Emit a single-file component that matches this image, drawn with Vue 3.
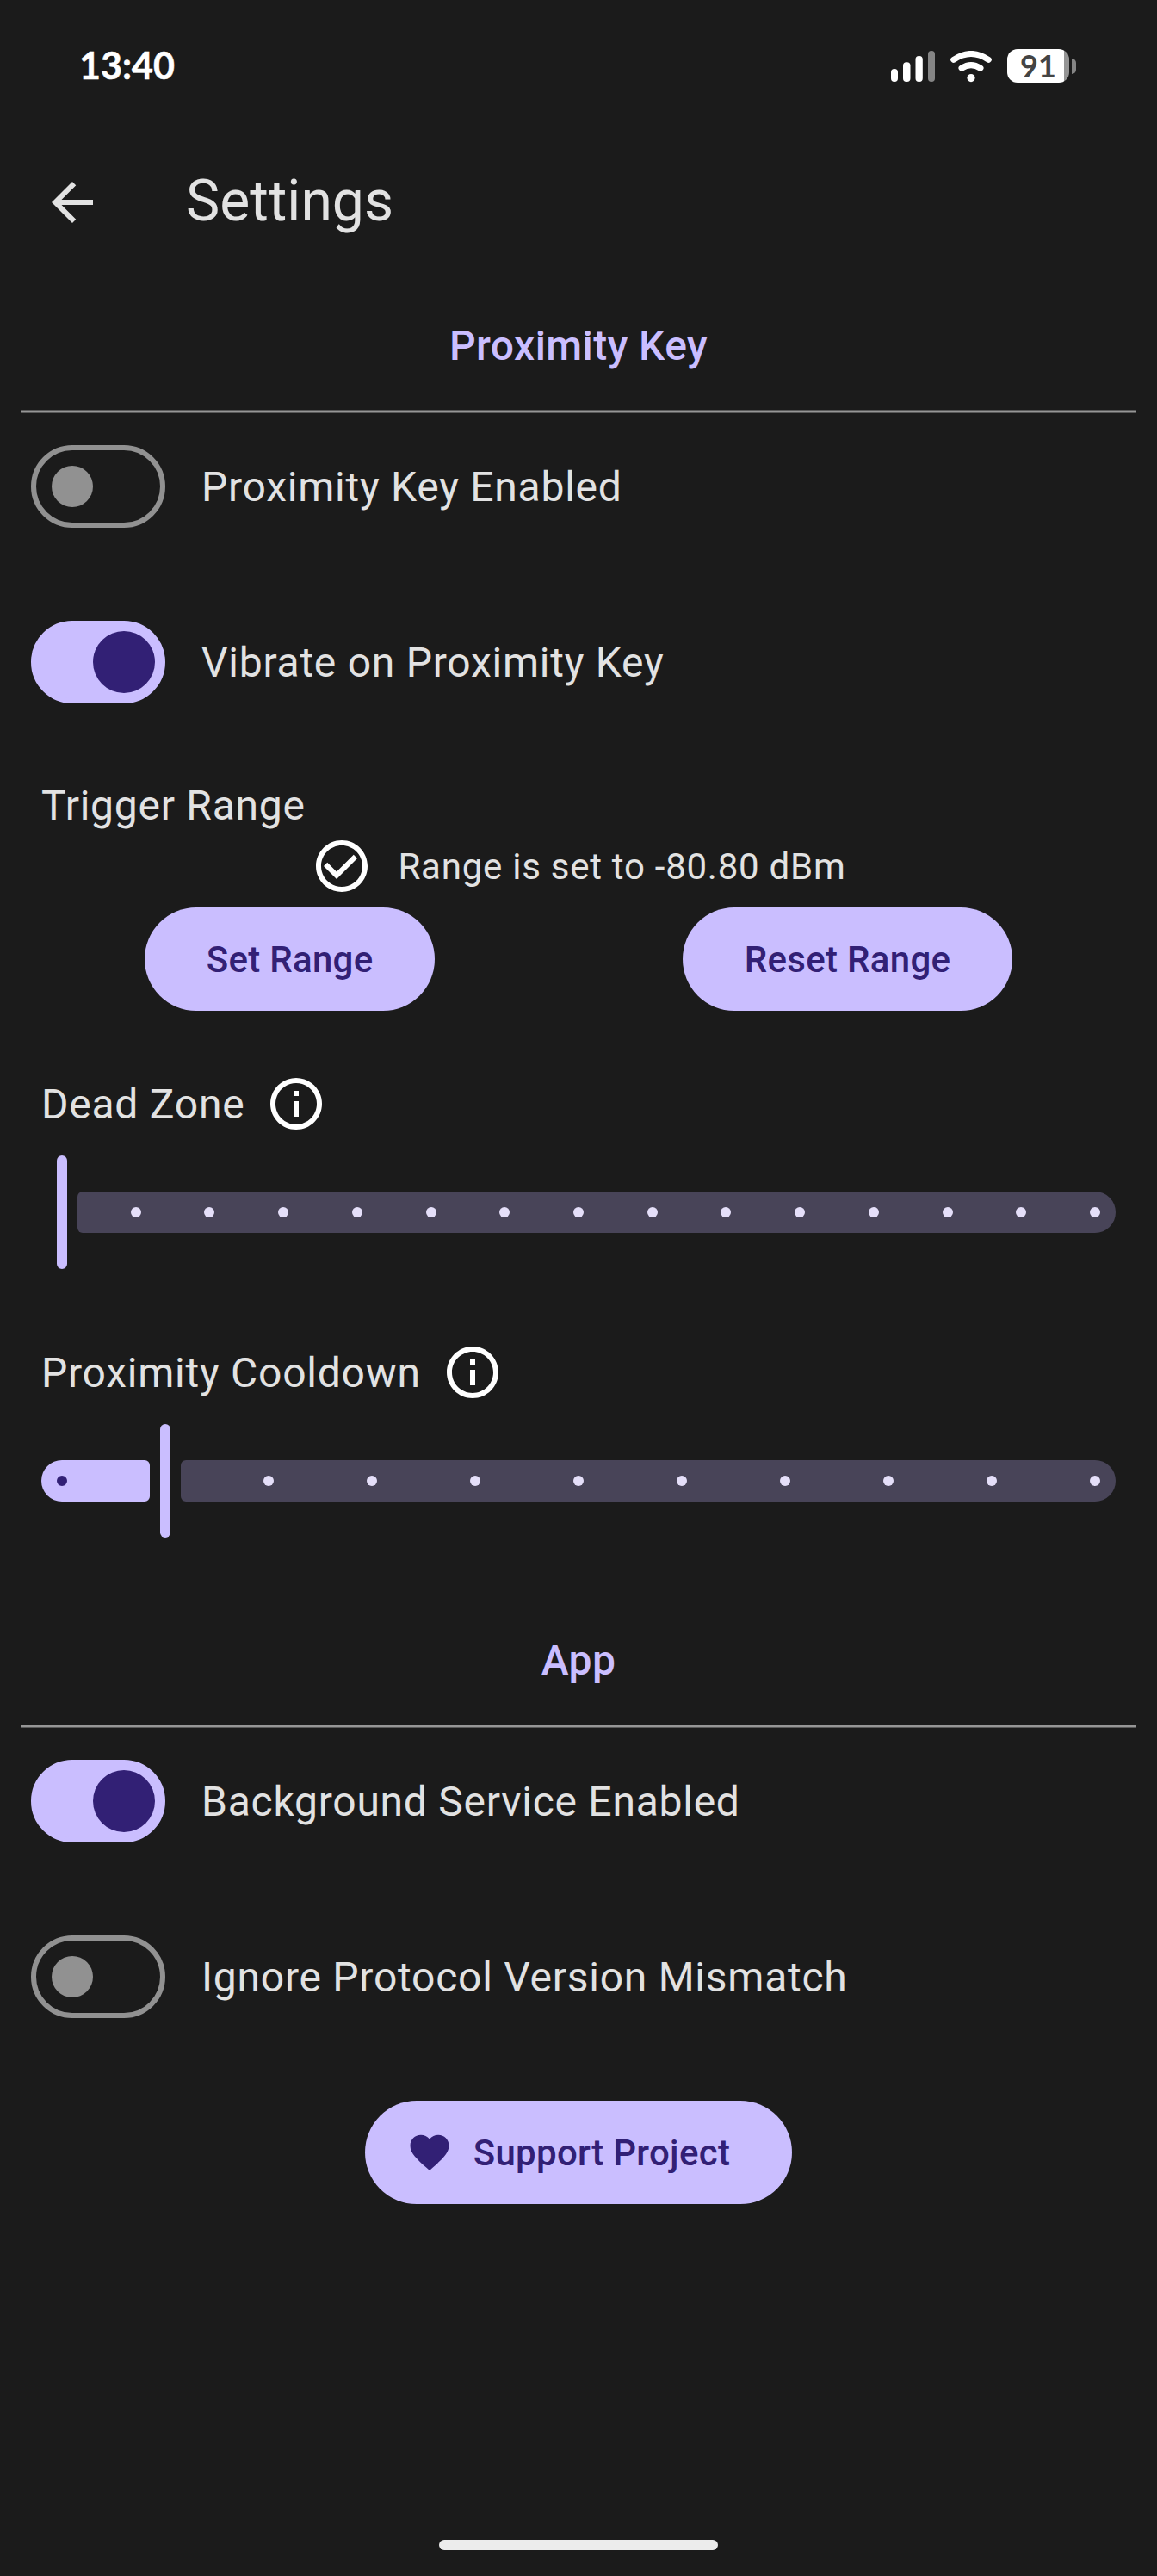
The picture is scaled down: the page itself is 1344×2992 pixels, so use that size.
<script setup>
const range = (from, to) => Array.from({ length: to - from + 1 }, (_, i) => from + i)

// Tick centres run from 24px inside the track's start to 24px inside its end.
const tickLeft = (index, steps) => `${24 + (1200 * index) / steps}px`

const sliders = [
  { label: 'Dead Zone', value: 0, steps: 14 },
  { label: 'Proximity Cooldown', value: 1, steps: 10 },
]

const proximitySwitches = [
  { label: 'Proximity Key Enabled', on: false },
  { label: 'Vibrate on Proximity Key', on: true },
]
const appSwitches = [
  { label: 'Background Service Enabled', on: true },
  { label: 'Ignore Protocol Version Mismatch', on: false },
]
</script>

<template>
  <div class="screen">
    <div class="status">
      <span class="clock">13:40</span>
      <div class="indicators">
        <svg class="signal" width="51" height="36" viewBox="0 0 51 36">
          <rect x="0" y="21" width="8" height="15" rx="4" fill="#fff" />
          <rect x="14" y="13.3" width="8.5" height="22.7" rx="4" fill="#fff" />
          <rect x="28.5" y="6" width="8.3" height="30" rx="4" fill="#fff" />
          <rect x="43" y="0" width="8" height="36" rx="4" fill="#858585" />
        </svg>
        <svg class="wifi" width="48" height="37" viewBox="0 0 48 37">
          <g fill="none" stroke="#fff" stroke-width="7" stroke-linecap="round">
            <path d="M3.7 10.4Q24 -3.4 44.3 10.4" />
            <path d="M13 20.2Q24 13 35 20.2" />
          </g>
          <circle cx="24" cy="31.6" r="4.6" fill="#fff" />
        </svg>
        <div class="battery"><span>91</span></div>
        <i class="nub"></i>
      </div>
    </div>

    <header class="appbar">
      <svg class="icon back" viewBox="0 0 24 24">
        <path d="M20 11H7.83l5.59-5.59L12 4l-8 8 8 8 1.41-1.41L7.83 13H20v-2z" />
      </svg>
      <h1>Settings</h1>
    </header>

    <main>
      <h2>Proximity Key</h2>
      <div class="divider"></div>
      <div v-for="s in proximitySwitches" :key="s.label" class="row">
        <span class="switch" :class="{ on: s.on }"><i></i></span>
        <span class="label">{{ s.label }}</span>
      </div>

      <div class="label trigger">Trigger Range</div>
      <div class="range">
        <svg class="icon" viewBox="0 0 24 24">
          <path d="M12 2C6.48 2 2 6.48 2 12s4.48 10 10 10 10-4.48 10-10S17.52 2 12 2zm0 18c-4.41 0-8-3.59-8-8s3.59-8 8-8 8 3.59 8 8-3.59 8-8 8zm4.59-12.42L10 14.17l-3.59-3.58L5 12l5 5 8-8z" />
        </svg>
        <span>Range is set to -80.80 dBm</span>
      </div>
      <div class="buttons">
        <button>Set Range</button>
        <button>Reset Range</button>
      </div>

      <section v-for="s in sliders" :key="s.label" class="setting">
        <div class="heading">
          <span class="label">{{ s.label }}</span>
          <svg class="icon" viewBox="0 0 24 24">
            <path d="M11 7h2v2h-2zm0 4h2v6h-2zm1-9C6.48 2 2 6.48 2 12s4.48 10 10 10 10-4.48 10-10S17.52 2 12 2zm0 18c-4.41 0-8-3.59-8-8s3.59-8 8-8 8 3.59 8 8-3.59 8-8 8z" />
          </svg>
        </div>
        <div class="slider">
          <div
            class="active"
            :class="{ empty: s.value === 0 }"
            :style="{ width: s.value ? `${6 + (1200 * s.value) / s.steps}px` : '6px' }"
          ></div>
          <div class="thumb"></div>
          <div class="inactive"></div>
          <i
            v-for="n in range(0, s.steps).filter((n) => n !== s.value)"
            :key="n"
            class="tick"
            :class="{ passed: n < s.value }"
            :style="{ left: tickLeft(n, s.steps) }"
          ></i>
        </div>
      </section>

      <h2 class="app-title">App</h2>
      <div class="divider"></div>
      <div v-for="s in appSwitches" :key="s.label" class="row">
        <span class="switch" :class="{ on: s.on }"><i></i></span>
        <span class="label">{{ s.label }}</span>
      </div>

      <button class="support">
        <svg viewBox="0 0 24 24">
          <path d="M12 21.35l-1.45-1.32C5.4 15.36 2 12.28 2 8.5 2 5.42 4.42 3 7.5 3c1.74 0 3.41.81 4.5 2.09C13.09 3.81 14.76 3 16.5 3 19.58 3 22 5.42 22 8.5c0 3.78-3.4 6.86-8.55 11.54L12 21.35z" />
        </svg>
        <span>Support Project</span>
      </button>
    </main>
    <div class="home"></div>
  </div>
</template>

<style>
body {
  background: #1b1b1b;
}
</style>

<style scoped>
.screen {
  box-sizing: border-box;
  width: 1344px;
  height: 2992px;
  display: flex;
  flex-direction: column;
  overflow: hidden;
  background: #1b1b1b;
  color: #e2e2e2;
  font-family: Roboto, sans-serif;
}
.status {
  flex: none;
  box-sizing: border-box;
  height: 160px;
  padding: 50px 94px 0 92px;
  display: flex;
  justify-content: space-between;
  align-items: flex-start;
  color: #fff;
}
.clock {
  font: 700 43px/52px Lato, sans-serif;
  -webkit-text-stroke: 0.5px #fff;
}
.indicators {
  display: flex;
  align-items: flex-start;
}
.signal {
  margin-top: 9px;
}
.wifi {
  margin: 9px 18px 0;
}
.battery {
  width: 72px;
  height: 39px;
  margin-top: 7px;
  border-radius: 12px;
  background: linear-gradient(90deg, #fff 66px, #959595 66px);
  color: #444;
  text-align: center;
  font: 700 36px/39px Lato, sans-serif;
}
.nub {
  width: 5px;
  height: 18px;
  margin: 18px 0 0 3px;
  border-radius: 0 5px 5px 0;
  background: #858585;
}
.icon {
  flex: none;
  width: 72px;
  height: 72px;
  fill: #fff;
}
.back {
  fill: #e2e2e2;
}
.appbar {
  flex: none;
  height: 150px;
  padding-left: 48px;
  display: flex;
  align-items: center;
  gap: 96px;
}
h1 {
  margin: 0 0 3px;
  font-size: 66px;
  line-height: 84px;
  font-weight: 400;
}
main {
  display: flex;
  flex-direction: column;
}
h2 {
  height: 110px;
  margin: 0;
  padding-top: 56px;
  text-align: center;
  font-size: 48px;
  line-height: 72px;
  font-weight: 500;
  letter-spacing: 0.45px;
  color: #cabeff;
}
.app-title {
  margin-top: 51px;
}
.divider {
  height: 2px;
  margin: 0 24px;
  border: solid #5a5a5a;
  border-width: 1px 0;
  background: #969696;
}
.row {
  height: 96px;
  margin-top: 108px;
  padding-left: 36px;
  display: flex;
  align-items: center;
  gap: 42px;
}
.divider + .row {
  margin-top: 37px;
}
.label {
  font-size: 48px;
  line-height: 72px;
  letter-spacing: 0.75px;
  white-space: nowrap;
}
.row .label,
.heading .label {
  margin: 1px 0 -1px;
}
.switch {
  box-sizing: border-box;
  width: 156px;
  height: 96px;
  padding: 0 18px;
  display: flex;
  align-items: center;
  border: 6px solid #919191;
  border-radius: 48px;
}
.switch i {
  width: 48px;
  height: 48px;
  border-radius: 50%;
  background: #919191;
}
.switch.on {
  justify-content: flex-end;
  padding: 0 6px;
  border-color: #cabeff;
  background: #cabeff;
}
.switch.on i {
  width: 72px;
  height: 72px;
  background: #322075;
}
.trigger {
  height: 70px;
  margin: 83px 0 0 48px;
}
.range {
  display: flex;
  justify-content: center;
  align-items: center;
  gap: 29px;
  font-size: 42px;
  letter-spacing: 0.75px;
}
.range span {
  padding-top: 1px;
}
.buttons {
  margin: 12px 24px 0;
  display: flex;
  justify-content: space-around;
}
button {
  box-sizing: border-box;
  height: 120px;
  padding: 1px 72px 0;
  border: 0;
  border-radius: 60px;
  background: #cabeff;
  color: #322075;
  font: 500 42px/60px Roboto, sans-serif;
  letter-spacing: 0.3px;
}
.setting {
  margin-top: 72px;
}
.setting + .setting {
  margin-top: 84px;
}
.heading {
  display: flex;
  align-items: center;
  gap: 24px;
  padding-left: 48px;
}
.slider {
  position: relative;
  height: 132px;
  margin: 24px 48px 0;
  display: flex;
  align-items: center;
  gap: 12px;
}
.active {
  height: 48px;
  border-radius: 24px 6px 6px 24px;
  background: #cabeff;
}
.active.empty {
  background: none;
}
.thumb {
  width: 12px;
  height: 132px;
  border-radius: 6px;
  background: #cabeff;
}
.inactive {
  flex: 1;
  height: 48px;
  border-radius: 6px 24px 24px 6px;
  background: #484458;
}
.tick {
  position: absolute;
  top: 60px;
  width: 12px;
  height: 12px;
  margin-left: -6px;
  border-radius: 50%;
  background: #e5dff9;
}
.tick.passed {
  background: #322075;
}
.support {
  align-self: center;
  margin-top: 96px;
  padding: 1px 72px 0 48px;
  display: flex;
  align-items: center;
  gap: 24px;
}
.support svg {
  width: 54px;
  height: 54px;
  margin-bottom: 1px;
  fill: #322075;
}
.home {
  width: 324px;
  height: 12px;
  margin: auto auto 30px;
  border-radius: 6px;
  background: #ececec;
}
</style>
